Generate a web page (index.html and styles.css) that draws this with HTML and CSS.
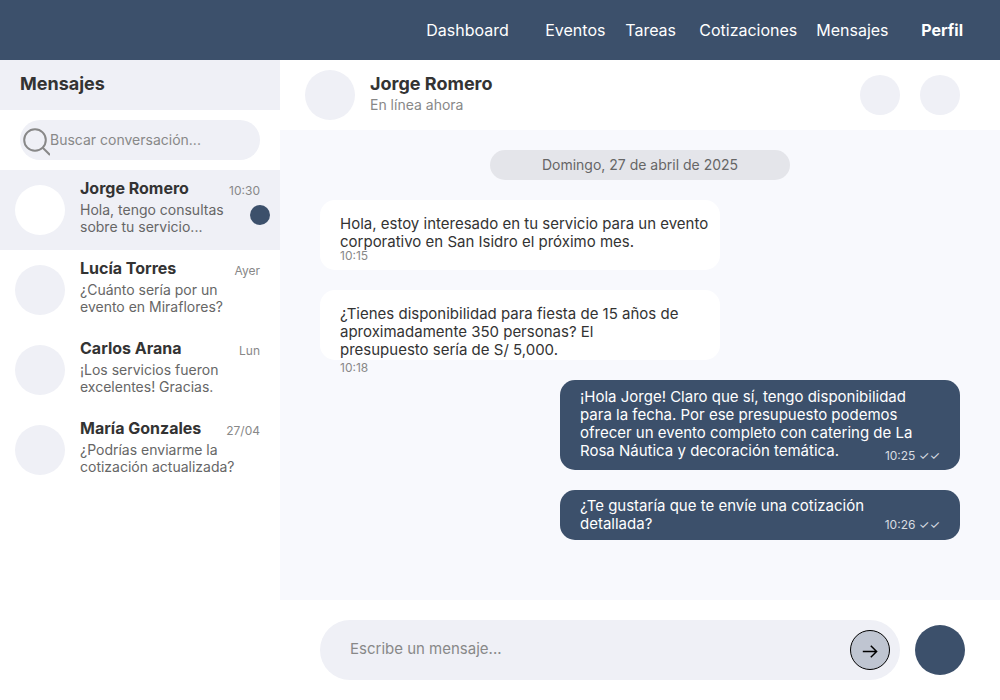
FILE: index.html
```html
<!DOCTYPE html>
<html lang="es">
<head>
  <meta charset="utf-8">
  <meta name="viewport" content="width=device-width, initial-scale=1">
  <title>Mensajes</title>
  <link rel="stylesheet" href="styles.css">
</head>
<body>
  <header class="topbar">
    <nav class="topnav" aria-label="Principal">
      <a href="#dashboard">Dashboard</a>
      <a href="#eventos">Eventos</a>
      <a href="#tareas">Tareas</a>
      <a href="#cotizaciones">Cotizaciones</a>
      <a href="#mensajes">Mensajes</a>
      <a href="#perfil" class="topnav-profile">Perfil</a>
    </nav>
  </header>

  <main class="layout">
    <aside class="sidebar">
      <h1 class="sidebar-title">Mensajes</h1>
      <label class="search">
        <svg class="search-icon" viewBox="0 0 27 28" aria-hidden="true">
          <circle cx="12" cy="12" r="10.8"/>
          <path d="M19.5 19.5L27 27"/>
        </svg>
        <input type="search" placeholder="Buscar conversación..." aria-label="Buscar conversación">
      </label>
      <ul class="chats">
        <li><a class="chat chat-active" href="#jorge">
          <span class="avatar"></span>
          <span class="chat-body">
            <span class="chat-head"><strong class="chat-name">Jorge Romero</strong><time class="chat-time">10:30</time></span>
            <span class="chat-preview">Hola, tengo consultas<br>sobre tu servicio...</span>
          </span>
          <span class="unread"></span>
        </a></li>
        <li><a class="chat" href="#lucia">
          <span class="avatar"></span>
          <span class="chat-body">
            <span class="chat-head"><strong class="chat-name">Lucía Torres</strong><time class="chat-time">Ayer</time></span>
            <span class="chat-preview">¿Cuánto sería por un<br>evento en Miraflores?</span>
          </span>
        </a></li>
        <li><a class="chat" href="#carlos">
          <span class="avatar"></span>
          <span class="chat-body">
            <span class="chat-head"><strong class="chat-name">Carlos Arana</strong><time class="chat-time">Lun</time></span>
            <span class="chat-preview">¡Los servicios fueron<br>excelentes! Gracias.</span>
          </span>
        </a></li>
        <li><a class="chat" href="#maria">
          <span class="avatar"></span>
          <span class="chat-body">
            <span class="chat-head"><strong class="chat-name">María Gonzales</strong><time class="chat-time">27/04</time></span>
            <span class="chat-preview">¿Podrías enviarme la<br>cotización actualizada?</span>
          </span>
        </a></li>
      </ul>
    </aside>

    <section class="conversation">
      <header class="contact">
        <span class="avatar"></span>
        <div class="contact-text">
          <h2 class="contact-name">Jorge Romero</h2>
          <p class="contact-status">En línea ahora</p>
        </div>
        <button class="contact-action" type="button" aria-label="Llamar"></button>
        <button class="contact-action" type="button" aria-label="Más opciones"></button>
      </header>

      <div class="thread">
        <p class="day">Domingo, 27 de abril de 2025</p>
        <div class="message">
          <div class="bubble bubble-in">
            <p>Hola, estoy interesado en tu servicio para un evento corporativo en San Isidro el próximo mes.</p>
            <time class="stamp">10:15</time>
          </div>
        </div>
        <div class="message message-footed">
          <div class="bubble bubble-in">
            <p>¿Tienes disponibilidad para fiesta de 15 años de aproximadamente 350 personas? El<br>presupuesto sería de S/ 5,000.</p>
          </div>
          <time class="stamp stamp-footer">10:18</time>
        </div>
        <div class="message">
          <div class="bubble bubble-out bubble-long">
            <p>¡Hola Jorge! Claro que sí, tengo disponibilidad para la fecha. Por ese presupuesto podemos ofrecer un evento completo con catering de La Rosa Náutica y decoración temática.</p>
            <time class="stamp">10:25 ✓✓</time>
          </div>
        </div>
        <div class="message">
          <div class="bubble bubble-out">
            <p>¿Te gustaría que te envíe una cotización detallada?</p>
            <time class="stamp">10:26 ✓✓</time>
          </div>
        </div>
      </div>

      <form class="composer">
        <div class="composer-field">
          <input type="text" placeholder="Escribe un mensaje..." aria-label="Escribe un mensaje">
          <button class="send" type="button" aria-label="Enviar">
            <svg viewBox="0 0 16 16" aria-hidden="true"><path d="M.8 9.5H14.8M8.8 3.7L14.6 9.5L8.8 15.3"/></svg>
          </button>
        </div>
        <button class="record" type="button" aria-label="Grabar audio"></button>
      </form>
    </section>
  </main>
</body>
</html>
```
FILE: styles.css
```css
:root {
  --navy: #3c506b;
  --soft: #eff0f6;
  --canvas: #f8f9fd;
  --ink: #333333;
  --muted: #666666;
  --faint: #888888;
}

* {
  box-sizing: border-box;
}

body {
  display: flex;
  flex-direction: column;
  min-height: 100vh;
  margin: 0;
  background: #ffffff;
  color: var(--ink);
  font-family: Inter, "Liberation Sans", sans-serif;
}

h1, h2, p, ul {
  margin: 0;
  padding: 0;
}

ul {
  list-style: none;
}

a {
  color: inherit;
  text-decoration: none;
}

button {
  flex: none;
  padding: 0;
  border: 0;
  border-radius: 50%;
}

input {
  flex: 1;
  min-width: 0;
  padding: 0;
  border: 0;
  outline: 0;
  background: transparent;
  color: var(--ink);
  font-family: inherit;
}

input::placeholder {
  color: var(--faint);
  opacity: 1;
}

.topbar {
  display: flex;
  align-items: center;
  justify-content: flex-end;
  height: 60px;
  padding-right: 37px;
  background: var(--navy);
}

.topnav {
  display: grid;
  grid-template-columns: 119px 80px 74px 117px 105px auto;
  color: #ffffff;
  font-size: 16px;
  line-height: 20px;
}

.topnav-profile {
  font-weight: 700;
}

.layout {
  display: flex;
  flex: 1;
}

.sidebar {
  flex: none;
  width: 280px;
}

.sidebar-title {
  padding: 12px 20px 14px;
  background: var(--soft);
  font-size: 18px;
  line-height: 24px;
}

.search {
  display: flex;
  align-items: center;
  height: 40px;
  margin: 10px 20px;
  padding: 0 20px 0 3px;
  border-radius: 20px;
  background: var(--soft);
}

.search-icon {
  flex: none;
  width: 27px;
  height: 28px;
  margin-top: 3px;
  fill: none;
  stroke: #888888;
  stroke-width: 2;
}

.search input {
  font-size: 14px;
  line-height: 20px;
}

.chat {
  display: flex;
  gap: 15px;
  height: 80px;
  padding: 8px 20px 0 15px;
  position: relative;
}

.chat-active {
  background: var(--soft);
}

.avatar {
  flex: none;
  width: 50px;
  height: 50px;
  border-radius: 50%;
  background: var(--soft);
}

.chat .avatar {
  margin-top: 7px;
}

.chat-active .avatar {
  background: #ffffff;
}

.chat-body {
  flex: 1;
}

.chat-head {
  display: flex;
  justify-content: space-between;
}

.chat-name {
  font-size: 16px;
  line-height: 20px;
}

.chat-time {
  padding-top: 4px;
  color: var(--faint);
  font-size: 12px;
  line-height: 18px;
}

.chat-preview {
  display: block;
  margin-top: 1px;
  color: var(--muted);
  font-size: 14px;
  line-height: 17px;
}

.unread {
  position: absolute;
  top: 35px;
  right: 10px;
  width: 20px;
  height: 20px;
  border-radius: 50%;
  background: var(--navy);
}

.conversation {
  display: flex;
  flex: 1;
  flex-direction: column;
  min-width: 0;
}

.contact {
  display: flex;
  align-items: center;
  gap: 20px;
  height: 70px;
  padding: 0 40px 0 25px;
}

.contact-text {
  flex: 1;
  margin-left: -5px;
  padding-bottom: 2px;
}

.contact-name {
  font-size: 18px;
  line-height: 22px;
}

.contact-status {
  color: var(--faint);
  font-size: 14px;
  line-height: 20px;
}

.contact-action {
  width: 40px;
  height: 40px;
  background: var(--soft);
}

.thread {
  display: flex;
  flex: 1;
  flex-direction: column;
  padding: 20px 40px;
  background: var(--canvas);
}

.day {
  align-self: center;
  width: 300px;
  margin: 0 0 20px;
  border-radius: 15px;
  background: #e4e5ea;
  color: var(--muted);
  font-size: 14px;
  line-height: 30px;
  text-align: center;
}

.message {
  display: flex;
  flex-direction: column;
  padding-bottom: 20px;
}

.message-footed {
  padding-bottom: 4px;
}

.bubble {
  width: 400px;
  max-width: 100%;
  border-radius: 15px;
  font-size: 15px;
  line-height: 18px;
}

.bubble-in {
  min-height: 70px;
  padding: 15px 10px 0 20px;
  background: #ffffff;
}

.bubble-out {
  display: grid;
  align-self: flex-end;
  padding: 7px 20px;
  background: var(--navy);
  color: #ffffff;
}

.bubble-out > * {
  grid-area: 1 / 1;
}

.bubble-out p {
  max-width: 340px;
}

.bubble-long {
  padding: 8px 20px 6px;
}

.bubble-long p {
  padding-bottom: 4px;
}

.stamp {
  display: block;
  color: var(--faint);
  font-size: 12px;
  line-height: 10px;
}

.stamp-footer {
  padding-left: 20px;
  line-height: 16px;
}

.bubble-out .stamp {
  align-self: end;
  justify-self: end;
  color: #d8dce1;
  line-height: 16px;
}

.composer {
  display: flex;
  align-items: center;
  gap: 15px;
  height: 100px;
  padding: 0 35px 0 40px;
}

.composer-field {
  display: flex;
  flex: 1;
  align-items: center;
  height: 60px;
  padding: 0 10px 0 30px;
  border-radius: 30px;
  background: var(--soft);
}

.composer-field input {
  padding-bottom: 2px;
  font-size: 15px;
  line-height: 20px;
}

.send {
  display: grid;
  place-items: center;
  width: 40px;
  height: 40px;
  border: 1px solid #000000;
  background: #bfc5d1;
}

.send svg {
  width: 16px;
  height: 16px;
  fill: none;
  stroke: #000000;
  stroke-width: 1.5;
}

.record {
  width: 50px;
  height: 50px;
  background: var(--navy);
}
```
